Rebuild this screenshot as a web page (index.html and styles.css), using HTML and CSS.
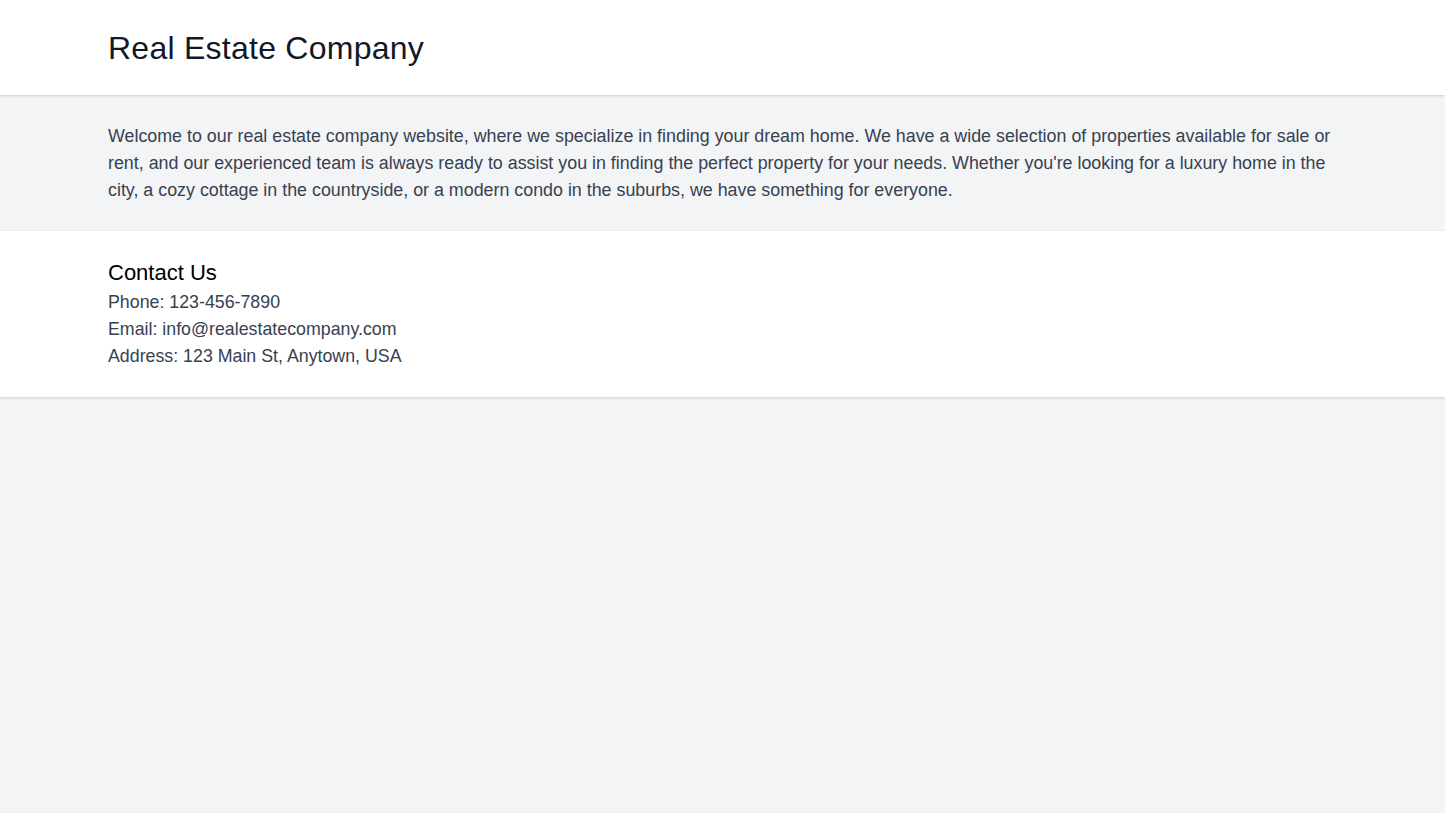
FILE: index.html
```html
<!DOCTYPE html>
<html lang="en">
<head>
<meta charset="utf-8">
<title>Real Estate Company</title>
<link rel="stylesheet" href="styles.css">
</head>
<body>
<header class="site-header">
  <div class="container">
    <h1 class="title">Real Estate Company</h1>
  </div>
</header>
<main>
  <section class="intro">
    <div class="container">
      <p>Welcome to our real estate company website, where we specialize in finding your dream home. We have a wide selection of properties available for sale or rent, and our experienced team is always ready to assist you in finding the perfect property for your needs. Whether you're looking for a luxury home in the city, a cozy cottage in the countryside, or a modern condo in the suburbs, we have something for everyone.</p>
    </div>
  </section>
  <section class="contact">
    <div class="container">
      <h2 class="contact-title">Contact Us</h2>
      <p>Phone: 123-456-7890</p>
      <p>Email: info@realestatecompany.com</p>
      <p>Address: 123 Main St, Anytown, USA</p>
    </div>
  </section>
</main>
</body>
</html>
```
FILE: styles.css
```css
* { box-sizing: border-box; }
html, body { margin: 0; padding: 0; }
body {
  background: #f3f4f6;
  font-family: "Liberation Sans", Arial, sans-serif;
  color: #374151;
  min-height: 813px;
}
.container {
  max-width: 1229px;
  margin: 0 auto;
}
.site-header {
  background: #fff;
  box-shadow: 0 1px 3px rgba(0,0,0,0.1), 0 1px 2px rgba(0,0,0,0.06);
  padding: 28px 0 27px;
  position: relative;
}
.title {
  margin: 0;
  font-size: 32px;
  line-height: 40px;
  font-weight: 400;
  letter-spacing: 0.25px;
  color: #111827;
}
.intro { padding: 28px 0 27px; }
.intro p { margin: 0; font-size: 17.85px; line-height: 27px; }
.contact {
  background: #fff;
  box-shadow: 0 1px 3px rgba(0,0,0,0.1), 0 1px 2px rgba(0,0,0,0.06);
  padding: 27px 0 26.5px;
}
.contact-title {
  margin: 0;
  font-size: 22px;
  line-height: 30.5px;
  font-weight: 400;
  color: #000;
}
.contact p { margin: 0; font-size: 17.8px; line-height: 27.3px; }
```
